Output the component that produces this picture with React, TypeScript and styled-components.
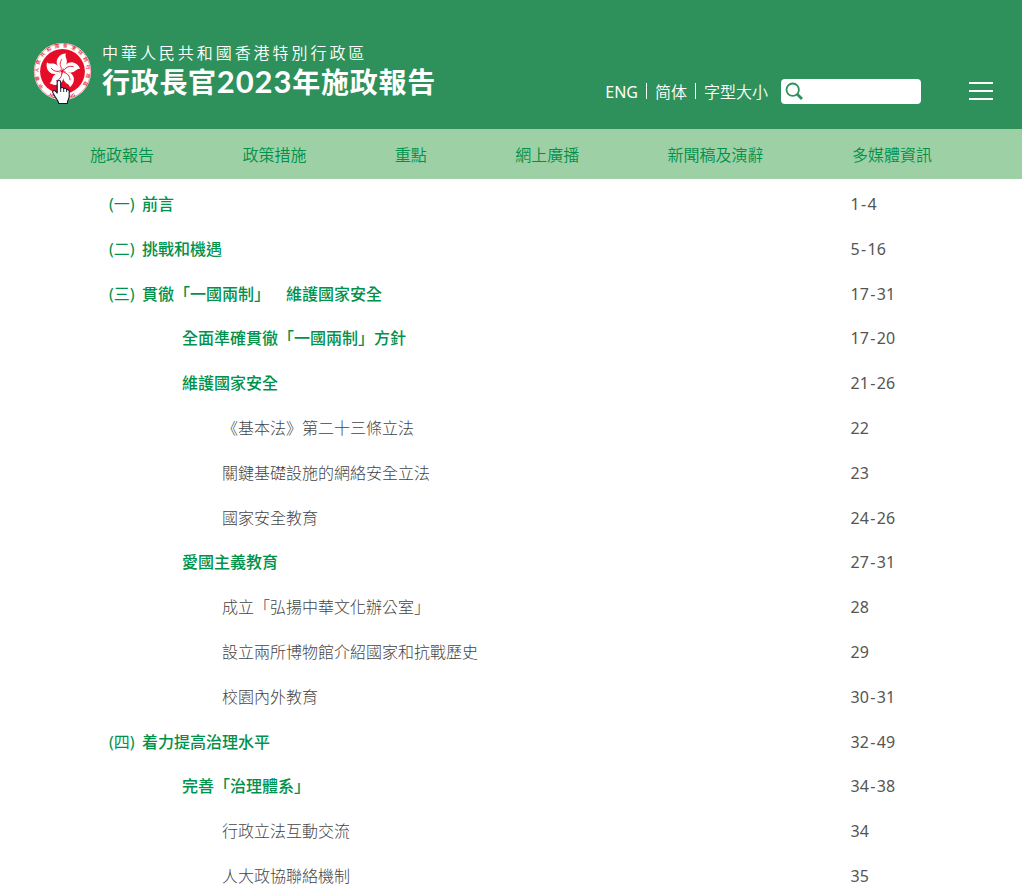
import React from 'react';
import styled, { createGlobalStyle } from 'styled-components';

const Global = createGlobalStyle`
  * { box-sizing: border-box; }
  html, body { margin: 0; background: #fff; }
  body {
    height: 894px;
    overflow: hidden;
    font-family: "Noto Sans", "Noto Sans CJK TC", sans-serif;
    font-size: 16px;
    line-height: 24px;
    text-spacing-trim: space-all;
  }
  a { color: inherit; text-decoration: none; }
`;

const Header = styled.header`
  display: flex;
  align-items: flex-start;
  height: 129px;
  padding-left: 33px;
  background: #2e915b;
  color: #fff;
`;

const EmblemBox = styled.div`
  position: relative;
  width: 59px;
  height: 59px;
  margin-top: 42px;
  flex: none;
`;

const Emblem = styled.svg`
  display: block;
  width: 59px;
  height: 59px;
`;

const Pointer = styled.svg`
  position: absolute;
  left: 18px;
  top: 37px;
  width: 20px;
  height: 26px;
`;

const Brand = styled.div`
  width: 350px;
  margin: 40px 0 0 10px;
  white-space: nowrap;
`;

const Region = styled.div`
  font-family: "Noto Sans CJK TC", sans-serif;
  font-weight: 350;
  font-size: 16px;
  line-height: 24px;
  letter-spacing: 2.95px;
`;

const Title = styled.h1`
  margin: 0;
  font-family: "Noto Sans CJK TC", sans-serif;
  font-size: 28px;
  line-height: 34px;
  font-weight: 700;
  letter-spacing: 0.7px;
`;

const Year = styled.span`
  font-family: Lato, sans-serif;
  font-size: 31px;
  font-weight: 700;
  letter-spacing: 0.9px;
`;

const Tools = styled.div`
  display: flex;
  align-items: center;
  height: 25px;
  margin: 79px 29px 0 auto;
`;

const Languages = styled.div`
  display: flex;
  align-items: center;
`;

const Language = styled.a`
  padding: 0 8px;
  line-height: 24px;

  & + & {
    padding-left: 9px;
    background: linear-gradient(#fff, #fff) left 3px / 1px 16px no-repeat;
    font-weight: 350;
  }
`;

const Search = styled.div`
  display: flex;
  align-items: center;
  width: 140px;
  height: 25px;
  margin-left: 5px;
  padding-left: 4px;
  border-radius: 4px;
  background: #fff;
`;

const MenuButton = styled.div`
  display: flex;
  flex-direction: column;
  justify-content: space-between;
  width: 24px;
  height: 18px;
  margin: -1px 0 0 48px;
`;

const MenuBar = styled.span`
  height: 2px;
  background: #fff;
`;

const Nav = styled.nav`
  display: flex;
  justify-content: space-between;
  height: 50px;
  padding: 14px 90px 0;
  background: #9dd0a5;
  color: #00914b;
  font-weight: 350;
`;

const List = styled.main`
  padding: 2.6px 0 0 109px;
`;

const Row = styled.div`
  display: flex;
  align-items: center;
  height: 44.8px;
`;

const Topic = styled.div<{ $level: number }>`
  display: flex;
  width: 741.5px;
  padding-left: ${p => [0, 73, 113][p.$level]}px;
  color: ${p => (p.$level === 2 ? '#444' : '#00914b')};
  font-weight: ${p => (p.$level === 2 ? 300 : 500)};
  white-space: pre;
`;

const Numeral = styled.span`
  width: 33px;
  font-weight: 400;
`;

const Paragraphs = styled.div`
  color: #555;
`;

const Dash = styled.span`
  padding: 0 1.4px;
`;

const navItems = ['施政報告', '政策措施', '重點', '網上廣播', '新聞稿及演辭', '多媒體資訊'];

type Entry = { level: number; text: string; pages: string; num?: string };

const entries: Entry[] = [
  { level: 0, num: '(一)', text: '前言', pages: '1-4' },
  { level: 0, num: '(二)', text: '挑戰和機遇', pages: '5-16' },
  { level: 0, num: '(三)', text: '貫徹「一國兩制」　維護國家安全', pages: '17-31' },
  { level: 1, text: '全面準確貫徹「一國兩制」方針', pages: '17-20' },
  { level: 1, text: '維護國家安全', pages: '21-26' },
  { level: 2, text: '《基本法》第二十三條立法', pages: '22' },
  { level: 2, text: '關鍵基礎設施的網絡安全立法', pages: '23' },
  { level: 2, text: '國家安全教育', pages: '24-26' },
  { level: 1, text: '愛國主義教育', pages: '27-31' },
  { level: 2, text: '成立「弘揚中華文化辦公室」', pages: '28' },
  { level: 2, text: '設立兩所博物館介紹國家和抗戰歷史', pages: '29' },
  { level: 2, text: '校園內外教育', pages: '30-31' },
  { level: 0, num: '(四)', text: '着力提高治理水平', pages: '32-49' },
  { level: 1, text: '完善「治理體系」', pages: '34-38' },
  { level: 2, text: '行政立法互動交流', pages: '34' },
  { level: 2, text: '人大政協聯絡機制', pages: '35' },
];

function PageRange({ pages }: { pages: string }) {
  const [from, to] = pages.split('-');
  return <Paragraphs>{from}{to && <><Dash>-</Dash>{to}</>}</Paragraphs>;
}

const petalAngles = [0, 72, 144, 216, 288];

function HongKongEmblem() {
  return (
    <Emblem viewBox="-29.5 -29.5 59 59">
      <defs>
        <path id="arcTop" d="M-18.6 15.6A24.3 24.3 0 1 1 18.6 15.6" />
        <path id="arcBottom" d="M-16 22.6A27.7 27.7 0 0 0 16 22.6" />
      </defs>
      <circle r="28.6" fill="#fff" />
      <circle r="27.9" fill="none" stroke="#e60d28" strokeWidth="0.4" />
      <circle r="22.4" fill="#e60d28" />
      <text fill="#e60d28" fontSize="4.6" fontFamily="Noto Sans CJK TC" fontWeight="500">
        <textPath href="#arcTop" textLength="107">中華人民共和國香港特別行政區</textPath>
      </text>
      <text fill="#e60d28" fontSize="4.4" fontFamily="Liberation Sans" fontWeight="700">
        <textPath href="#arcBottom" startOffset="3">HONG KONG</textPath>
      </text>
      <g transform="translate(0 -.5) rotate(-2) scale(1.08)">
        {petalAngles.map(a => (
          <g key={a} transform={`rotate(${a})`}>
            <path d="M0 -1C-4.500 -3.500 -6.500 -8 -4 -12C-2 -15 1 -16 3.800 -16C2 -13 5.500 -11 4 -6.500C3.200 -4 1.500 -2.500 0 -1Z" fill="#fff" />
            <path d="M0 -1.500C-2.500 -4.500 -2.500 -8 -.2 -11" fill="none" stroke="#e60d28" strokeWidth="0.8" />
          </g>
        ))}
      </g>
    </Emblem>
  );
}

export default function App() {
  return (
    <>
      <Global />
      <Header>
        <EmblemBox>
          <HongKongEmblem />
          <Pointer viewBox="0 0 20 26">
            <path
              d="M6.200 14V3.300C6.200 .8 9.700 .8 9.700 3.300V9.500C10 8 12.500 8.200 12.700 9.800C13.400 8.800 15.400 9.200 15.600 10.700C16.600 10 18.200 10.800 18.200 12.300V17.500C18.200 20 16.500 20.500 16.300 24.500H7.700C7.700 21.500 4.500 19 3.200 16.200L1.800 13.500C1 11.700 3.300 10.800 4.400 12.200Z"
              fill="#fff"
              stroke="#0b1730"
              strokeWidth="1.1"
              strokeLinejoin="round"
            />
            <path d="M9.700 9.500V13M12.700 9.800V13M15.600 10.700V13" stroke="#0b1730" strokeWidth="0.9" />
          </Pointer>
        </EmblemBox>
        <Brand>
          <Region>中華人民共和國香港特別行政區</Region>
          <Title>行政長官<Year>2023</Year>年施政報告</Title>
        </Brand>
        <Tools>
          <Languages>
            <Language>ENG</Language>
            <Language>简体</Language>
            <Language>字型大小</Language>
          </Languages>
          <Search>
            <svg width="19" height="19" viewBox="0 0 19 19" fill="none" stroke="#2e915b">
              <circle cx="7.700" cy="7.700" r="6.200" strokeWidth="1.800" />
              <path d="M12 12L17 17" strokeWidth="2.800" />
            </svg>
          </Search>
          <MenuButton>
            <MenuBar />
            <MenuBar />
            <MenuBar />
          </MenuButton>
        </Tools>
      </Header>
      <Nav>
        {navItems.map(item => <a key={item}>{item}</a>)}
      </Nav>
      <List>
        {entries.map(e => (
          <Row key={e.text}>
            <Topic $level={e.level}>
              {e.num && <Numeral>{e.num}</Numeral>}
              {e.text}
            </Topic>
            <PageRange pages={e.pages} />
          </Row>
        ))}
      </List>
    </>
  );
}
